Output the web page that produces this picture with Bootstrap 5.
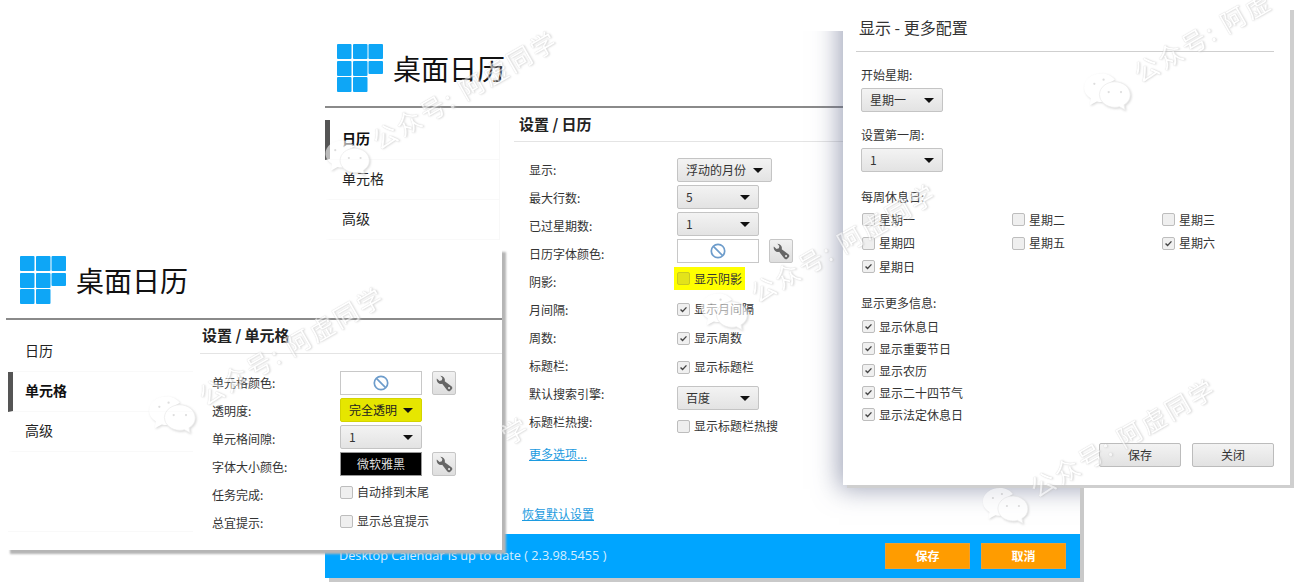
<!DOCTYPE html>
<html lang="zh-CN">
<head>
  <meta charset="UTF-8" />
  <meta name="viewport" content="width=device-width, initial-scale=1.0" />
  <title>桌面日历 设置</title>
  <link href="https://cdn.jsdelivr.net/npm/bootstrap@5.3.0/dist/css/bootstrap.min.css" rel="stylesheet">
  <style>
    body {
      background: #fff;
      color: #222;
      font-family: "Noto Sans CJK SC", "Open Sans", sans-serif;
      font-size: 12px;
      height: 585px;
      overflow: hidden;
      position: relative;
    }
    /* the three windows sit on a free canvas */
    .app-win { position: absolute; background: #fff; }
    .win-back { left: 325px; top: 31px; width: 755px; height: 547px; box-shadow: 4px 4px 0 #c9c9c9; overflow: hidden; }
    .win-left { left: 6px; top: 248px; width: 496px; height: 302px; box-shadow: 4px 4px 2px #b5b5b5; }
    .win-pop { left: 843px; top: 7px; width: 447px; height: 478px; box-shadow: 4px 3px 0 #cfcfcf; padding: 0 16px 0 13px; }
    .pop-shade { position: absolute; left: 518px; top: -24px; width: 447px; height: 478px; box-shadow: 0 0 24px 4px rgba(80, 90, 125, .55); }

    .app-head { border-bottom: 2px solid #8a8a8a; }
    .win-back .app-head { height: 77px; padding: 13px 0 0 12px; }
    .win-left .app-head { height: 72px; padding: 8px 0 0 14px; }
    .app-title { font-size: 28px; line-height: 48px; margin-left: 10px; color: #111; }

    .side-menu { width: 175px; padding-top: 12px; flex: none; }
    .win-left .side-menu { margin-left: 2px; width: 185px; border-bottom: 1px solid #f9f9f9; height: 212px; }
    .side-item { height: 40px; line-height: 36px; font-size: 14px; padding-left: 12px; border-left: 5px solid transparent; border-bottom: 1px solid #f9f9f9; }
    .side-item.is-on { font-weight: 700; border-left-color: #555; color: #111; }
    .win-back .side-item { padding-left: 12px; border-right: 1px solid #f8f8f8; }

    .set-pane { flex: 1; min-width: 0; }
    .win-back .set-pane { margin-left: 14px; }
    .win-left .set-pane { margin-left: 7px; }
    .set-title { font-size: 15px; font-weight: 700; height: 34px; line-height: 31px; margin: 0; padding: 0 0 0 5px; border-bottom: 1px solid #e4e4e4; color: #222; }
    .win-left .set-title { padding-left: 2px; line-height: 30px; }
    .opt-grid { padding: 16px 0 0 15px; }
    .win-left .opt-grid { padding: 17px 0 0 12px; }
    .label-col { flex: none; width: 148px; padding-top: 0; }
    .win-left .label-col { width: 128px; }
    .opt-label { height: 28px; line-height: 24px; color: #333; }

    .ctl-col { display: flex; flex-direction: column; gap: 3px; }
    .pick-btn {
      width: 82px; height: 24px; padding: 0 8px;
      display: flex; align-items: center; justify-content: space-between;
      font-size: 12px; line-height: 1; color: #333;
      background: linear-gradient(#f3f3f3, #e3e3e3);
      border: 1px solid #c4c4c4; border-radius: 2px;
    }
    .pick-btn::after { border-top: 5px solid #111; border-right: 5px solid transparent; border-left: 5px solid transparent; border-bottom: 0; margin: 0; }
    .pick-btn.pick-wide { width: 95px; }
    .pick-btn.pick-hot { background: #e6e600; border-color: #d4d400; color: #222; }
    .pick-btn.pick-low { margin-top: 3px; }
    .swatch { width: 82px; height: 24px; background: #fff; border: 1px solid #c8c8c8; display: flex; align-items: center; justify-content: center; }
    .swatch.swatch-dark { background: #000; color: #ddd; border-color: #999; }
    .tool-btn { width: 24px; height: 24px; padding: 0; margin-left: 10px; display: flex; align-items: center; justify-content: center; background: linear-gradient(#f1f1f1, #dedede); border: 1px solid #c6c6c6; border-radius: 2px; }

    .tick { display: flex; align-items: center; gap: 4px; margin: 0; padding: 0; min-height: 0; height: 26px; color: #333; }
    .tick .form-check-input {
      float: none; margin: 0; width: 13px; height: 13px; border: 1px solid #bdbdbd; border-radius: 2px; background-color: #efefef; flex: none;
    }
    .tick .form-check-input:checked {
      background-color: #f0f0f0; border-color: #bdbdbd;
      background-image: url("data:image/svg+xml,%3csvg xmlns='http://www.w3.org/2000/svg' viewBox='0 0 13 13'%3e%3cpath fill='none' stroke='%23444' stroke-width='1.6' d='M3 6.5l2.4 2.4L10 4'/%3e%3c/svg%3e");
    }
    .tick-hot { background: #ff0; width: 71px; height: 23px; margin: 1px 0 3px -3px; padding-left: 3px; }
    .tick-hot .form-check-input { background-color: #e3e31a; border-color: #c9c920; }
    .ctl-col .tick-plain { height: 26px; }
    .app-link { color: #1c9be0; text-decoration: underline; }
    .more-link { display: block; margin: 7px 0 0 0; line-height: 18px; }
    .reset-link { position: absolute; left: 197px; top: 474px; }

    .app-foot { position: absolute; left: 0; right: 0; bottom: 0; height: 44px; background: #00a5ff; padding: 0 14px; color: #d5eeff; font-family: "Open Sans", sans-serif; font-size: 12.7px; }
    .foot-gap { gap: 11px; }
    .foot-btn { width: 85px; height: 26px; padding: 0; background: #ff9c00; border: 1px solid #f0a030; border-radius: 0; color: #fff; font-size: 12px; font-family: "Noto Sans CJK SC", sans-serif; font-weight: 700; }
    .foot-btn:hover { background: #ff9c00; color: #fff; }

    .pop-title { font-size: 16px; height: 44px; line-height: 41px; margin: 0 0 0 3px; font-weight: 400; color: #333; }
    .pop-rule { margin: 0; border: 0; border-top: 1px solid #cfcfcf; opacity: 1; }
    .pop-body { padding: 0 0 0 5px; }
    .pop-label { line-height: 18px; color: #333; }
    .gap-a { margin-top: 14px; margin-bottom: 4px; }
    .gap-b { margin-top: 14px; margin-bottom: 4px; }
    .gap-c { margin-top: 16px; margin-bottom: 2px; }
    .gap-d { margin-top: 15px; margin-bottom: 4px; }
    .week-grid { width: 450px; }
    .week-grid .tick { height: 23.5px; padding-left: 1px; }
    .info-list .tick { height: 22px; padding-left: 1px; }
    .pop-actions { position: absolute; right: 16px; top: 436px; gap: 11px; }
    .gray-btn { width: 82px; height: 24px; padding: 0; font-size: 12px; color: #333; background: linear-gradient(#f3f3f3, #e2e2e2); border: 1px solid #bcbcbc; border-radius: 2px; }

    /* watermark lies over everything */
    .wm { position: absolute; z-index: 9; pointer-events: none; display: flex; align-items: center; gap: 8px; transform: rotate(-30deg); transform-origin: left center; white-space: nowrap; opacity: .6; }
    .wm-text { font-size: 25px; font-weight: 400; letter-spacing: 2.5px; color: #fff; text-shadow: 0 0 1px #a8a8a8, 1px 1px 2px #c4c4c4; }
    .wm svg { transform: rotate(30deg); flex: none; filter: drop-shadow(1px 1px 1px #bdbdbd); }
  </style>
</head>
<body>

  <!-- back window: 日历 settings -->
  <div class="app-win win-back">
    <div class="pop-shade"></div>
    <div class="app-head d-flex">
      <svg width="46" height="48" viewBox="0 0 46 48"><g fill="#0ea6f6"><rect width="14.5" height="15" rx="1"/><rect x="16" width="14.5" height="15" rx="1"/><rect x="31.5" width="14.5" height="15" rx="1"/><rect y="17" width="14.5" height="15" rx="1"/><rect x="16" y="17" width="14.5" height="15" rx="1"/><rect x="31.5" y="17" width="14.5" height="13" rx="1"/><rect y="33" width="14.5" height="15" rx="1"/><rect x="16" y="33" width="14.5" height="15" rx="1"/></g></svg>
      <div class="app-title">桌面日历</div>
    </div>
    <div class="d-flex">
      <div class="side-menu">
        <div class="side-item is-on">日历</div>
        <div class="side-item">单元格</div>
        <div class="side-item">高级</div>
      </div>
      <div class="set-pane">
        <h6 class="set-title">设置 / 日历</h6>
        <div class="opt-grid d-flex">
          <div class="label-col">
            <div class="opt-label">显示:</div>
            <div class="opt-label">最大行数:</div>
            <div class="opt-label">已过星期数:</div>
            <div class="opt-label">日历字体颜色:</div>
            <div class="opt-label">阴影:</div>
            <div class="opt-label">月间隔:</div>
            <div class="opt-label">周数:</div>
            <div class="opt-label">标题栏:</div>
            <div class="opt-label">默认搜索引擎:</div>
            <div class="opt-label">标题栏热搜:</div>
            <a class="app-link more-link" href="#">更多选项...</a>
          </div>
          <div class="ctl-col">
            <button class="btn dropdown-toggle pick-btn pick-wide" type="button">浮动的月份</button>
            <button class="btn dropdown-toggle pick-btn" type="button">5</button>
            <button class="btn dropdown-toggle pick-btn" type="button">1</button>
            <div class="d-flex">
              <div class="swatch"><svg width="16" height="16" viewBox="0 0 16 16"><circle cx="8" cy="8" r="6.7" fill="none" stroke="#6d9ccb" stroke-width="1.7"/><path d="M3.4 3.4l9.2 9.2" stroke="#6d9ccb" stroke-width="1.7"/></svg></div>
              <button class="btn tool-btn" type="button"><svg width="17" height="17" viewBox="0 0 16 16"><path fill="#666" d="M4.100 .8a4 4 0 0 1 4.100 5.100l6.300 4.700a2.100 2.100 0 0 1-.1 3.200l-.7.700a2.100 2.100 0 0 1-3.200-.1L5.800 8.200A4 4 0 0 1 .8 3.300l2.500 2.300 2.200-.6.500-2.200z"/><circle cx="12.300" cy="12.300" r="1" fill="#e6e6e6"/></svg></button>
            </div>
            <label class="tick tick-hot"><input class="form-check-input" type="checkbox">显示阴影</label>
            <label class="tick tick-plain"><input class="form-check-input" type="checkbox" checked>显示月间隔</label>
            <label class="tick tick-plain"><input class="form-check-input" type="checkbox" checked>显示周数</label>
            <label class="tick tick-plain"><input class="form-check-input" type="checkbox" checked>显示标题栏</label>
            <button class="btn dropdown-toggle pick-btn pick-low" type="button">百度</button>
            <label class="tick tick-plain"><input class="form-check-input" type="checkbox">显示标题栏热搜</label>
          </div>
        </div>
      </div>
    </div>
    <a class="app-link reset-link" href="#">恢复默认设置</a>
    <div class="app-foot d-flex align-items-center justify-content-between">
      <span>Desktop Calendar is up to date ( 2.3.98.5455 )</span>
      <div class="d-flex foot-gap">
        <button class="btn foot-btn" type="button">保存</button>
        <button class="btn foot-btn" type="button">取消</button>
      </div>
    </div>
  </div>

  <!-- front left window: 单元格 settings -->
  <div class="app-win win-left">
    <div class="app-head d-flex">
      <svg width="46" height="48" viewBox="0 0 46 48"><g fill="#0ea6f6"><rect width="14.5" height="15" rx="1"/><rect x="16" width="14.5" height="15" rx="1"/><rect x="31.5" width="14.5" height="15" rx="1"/><rect y="17" width="14.5" height="15" rx="1"/><rect x="16" y="17" width="14.5" height="15" rx="1"/><rect x="31.5" y="17" width="14.5" height="13" rx="1"/><rect y="33" width="14.5" height="15" rx="1"/><rect x="16" y="33" width="14.5" height="15" rx="1"/></g></svg>
      <div class="app-title">桌面日历</div>
    </div>
    <div class="d-flex">
      <div class="side-menu">
        <div class="side-item">日历</div>
        <div class="side-item is-on">单元格</div>
        <div class="side-item">高级</div>
      </div>
      <div class="set-pane">
        <h6 class="set-title">设置 / 单元格</h6>
        <div class="opt-grid d-flex">
          <div class="label-col">
            <div class="opt-label">单元格颜色:</div>
            <div class="opt-label">透明度:</div>
            <div class="opt-label">单元格间隙:</div>
            <div class="opt-label">字体大小颜色:</div>
            <div class="opt-label">任务完成:</div>
            <div class="opt-label">总宜提示:</div>
          </div>
          <div class="ctl-col">
            <div class="d-flex">
              <div class="swatch"><svg width="16" height="16" viewBox="0 0 16 16"><circle cx="8" cy="8" r="6.7" fill="none" stroke="#6d9ccb" stroke-width="1.7"/><path d="M3.4 3.4l9.2 9.2" stroke="#6d9ccb" stroke-width="1.7"/></svg></div>
              <button class="btn tool-btn" type="button"><svg width="17" height="17" viewBox="0 0 16 16"><path fill="#666" d="M4.100 .8a4 4 0 0 1 4.100 5.100l6.300 4.700a2.100 2.100 0 0 1-.1 3.200l-.7.700a2.100 2.100 0 0 1-3.200-.1L5.800 8.200A4 4 0 0 1 .8 3.300l2.500 2.300 2.200-.6.500-2.200z"/><circle cx="12.300" cy="12.300" r="1" fill="#e6e6e6"/></svg></button>
            </div>
            <button class="btn dropdown-toggle pick-btn pick-hot" type="button">完全透明</button>
            <button class="btn dropdown-toggle pick-btn" type="button">1</button>
            <div class="d-flex">
              <div class="swatch swatch-dark">微软雅黑</div>
              <button class="btn tool-btn" type="button"><svg width="17" height="17" viewBox="0 0 16 16"><path fill="#666" d="M4.100 .8a4 4 0 0 1 4.100 5.100l6.300 4.700a2.100 2.100 0 0 1-.1 3.200l-.7.700a2.100 2.100 0 0 1-3.200-.1L5.800 8.200A4 4 0 0 1 .8 3.300l2.500 2.300 2.200-.6.500-2.200z"/><circle cx="12.300" cy="12.300" r="1" fill="#e6e6e6"/></svg></button>
            </div>
            <label class="tick tick-plain"><input class="form-check-input" type="checkbox">自动排到末尾</label>
            <label class="tick tick-plain"><input class="form-check-input" type="checkbox">显示总宜提示</label>
          </div>
        </div>
      </div>
    </div>
  </div>

  <!-- popup: more options -->
  <div class="app-win win-pop">
    <h6 class="pop-title">显示 - 更多配置</h6>
    <hr class="pop-rule">
    <div class="pop-body">
      <div class="pop-label gap-a">开始星期:</div>
      <button class="btn dropdown-toggle pick-btn" type="button">星期一</button>
      <div class="pop-label gap-b">设置第一周:</div>
      <button class="btn dropdown-toggle pick-btn" type="button">1</button>
      <div class="pop-label gap-c">每周休息日:</div>
      <div class="row g-0 week-grid">
        <div class="col-4"><label class="tick"><input class="form-check-input" type="checkbox">星期一</label></div>
        <div class="col-4"><label class="tick"><input class="form-check-input" type="checkbox">星期二</label></div>
        <div class="col-4"><label class="tick"><input class="form-check-input" type="checkbox">星期三</label></div>
        <div class="col-4"><label class="tick"><input class="form-check-input" type="checkbox">星期四</label></div>
        <div class="col-4"><label class="tick"><input class="form-check-input" type="checkbox">星期五</label></div>
        <div class="col-4"><label class="tick"><input class="form-check-input" type="checkbox" checked>星期六</label></div>
        <div class="col-4"><label class="tick"><input class="form-check-input" type="checkbox" checked>星期日</label></div>
      </div>
      <div class="pop-label gap-d">显示更多信息:</div>
      <div class="info-list">
        <label class="tick"><input class="form-check-input" type="checkbox" checked>显示休息日</label>
        <label class="tick"><input class="form-check-input" type="checkbox" checked>显示重要节日</label>
        <label class="tick"><input class="form-check-input" type="checkbox" checked>显示农历</label>
        <label class="tick"><input class="form-check-input" type="checkbox" checked>显示二十四节气</label>
        <label class="tick"><input class="form-check-input" type="checkbox" checked>显示法定休息日</label>
      </div>
    </div>
    <div class="pop-actions d-flex">
      <button class="btn gray-btn" type="button">保存</button>
      <button class="btn gray-btn" type="button">关闭</button>
    </div>
  </div>

  <!-- watermarks -->
  <svg width="0" height="0" class="position-absolute"><defs><g id="wm-bubble"><path d="M18 2C8.500 2 1 8 1 15.500c0 4.500 2.500 8 6.500 10.500L6.500 33l7-3.800c2 .5 3.500.7 5 .5L19 15 31 8C28 4.500 24 2 18 2z" fill="#fff"/><path d="M31 10c-8 0-15 5.500-15 12.500S23 35 31 35c1.500 0 3-.2 4.500-.6l5.500 3.100-1-5c4-2.300 6-5.800 6-9.700C46 15.500 39 10 31 10z" fill="#fff" stroke="#e2e2e2" stroke-width=".8"/><g fill="#c8c8c8"><circle cx="11" cy="12" r="1.100"/><circle cx="20" cy="8" r="1.100"/><circle cx="25" cy="20" r="1.100"/><circle cx="37" cy="20" r="1.100"/></g></g></defs></svg>
  <div class="wm" style="left:327px;top:150px"><svg width="46" height="38" viewBox="0 0 46 39"><use href="#wm-bubble"/></svg><span class="wm-text">公众号: 阿虚同学</span></div>
  <div class="wm" style="left:150px;top:407px"><svg width="50" height="40" viewBox="0 0 46 39"><use href="#wm-bubble"/></svg><span class="wm-text">公众号: 阿虚同学</span></div>
  <div class="wm" style="left:702px;top:304px"><svg width="50" height="40" viewBox="0 0 46 39"><use href="#wm-bubble"/></svg><span class="wm-text">公众号: 阿虚同学</span></div>
  <div class="wm" style="left:1085px;top:84px"><svg width="50" height="40" viewBox="0 0 46 39"><use href="#wm-bubble"/></svg><span class="wm-text">公众号: 阿虚</span></div>
  <div class="wm" style="left:985px;top:497px"><svg width="46" height="40" viewBox="0 0 46 39"><use href="#wm-bubble"/></svg><span class="wm-text">公众号: 阿虚同学</span></div>
  <div class="wm" style="left:503px;top:418px"><span class="wm-text">学</span></div>

  <script src="https://cdn.jsdelivr.net/npm/bootstrap@5.3.0/dist/js/bootstrap.bundle.min.js"></script>
</body>
</html>
